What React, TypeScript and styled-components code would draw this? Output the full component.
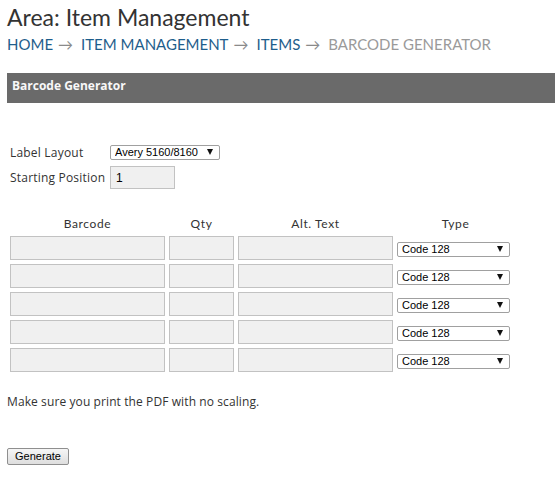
import styled, { createGlobalStyle } from 'styled-components'

const GlobalStyle = createGlobalStyle`
  html, body {
    margin: 0;
    padding: 0;
    background: #fff;
  }
  body {
    font-family: 'Open Sans', 'Liberation Sans', sans-serif;
    color: #333;
  }
`

const rows = [0, 1, 2, 3, 4]

const App = () => {
  return (
    <Page>
      <GlobalStyle />
      <Title>Area: Item Management</Title>
      <Crumbs>
        <a>Home</a>
        <Arrow>→</Arrow>
        <a>Item Management</a>
        <Arrow>→</Arrow>
        <a>Items</a>
        <Arrow>→</Arrow>
        <Current>Barcode Generator</Current>
      </Crumbs>

      <PanelBar>Barcode Generator</PanelBar>

      <SettingsGrid>
        <FieldLabel>Label Layout</FieldLabel>
        <SelectBox $width={110}>
          <select defaultValue="avery">
            <option value="avery">Avery 5160/8160</option>
          </select>
        </SelectBox>
        <FieldLabel>Starting Position</FieldLabel>
        <TextInput $width={65} $height={23} defaultValue="1" />
      </SettingsGrid>

      <BarcodeTable>
        <HeadCell>Barcode</HeadCell>
        <HeadCell>Qty</HeadCell>
        <HeadCell>Alt. Text</HeadCell>
        <HeadCell>Type</HeadCell>
        {rows.map((r) => (
          <Row key={r}>
            <TextInput $width={155} />
            <TextInput $width={65} />
            <TextInput $width={155} />
            <SelectBox $width={113}>
              <select defaultValue="128">
                <option value="128">Code 128</option>
              </select>
            </SelectBox>
          </Row>
        ))}
      </BarcodeTable>

      <Note>Make sure you print the PDF with no scaling.</Note>

      <GenerateButton type="button">Generate</GenerateButton>
    </Page>
  )
}

export default App

const Page = styled.div`
  padding: 4px 0 0 7px;
`

const Title = styled.h1`
  margin: 0;
  font-family: Lato, 'Open Sans', sans-serif;
  font-weight: 400;
  font-size: 23px;
  line-height: 27px;
  color: #333;
`

const Crumbs = styled.div`
  margin-top: 4px;
  font-family: Lato, 'Open Sans', sans-serif;
  font-size: 15px;
  line-height: 18px;
  text-transform: uppercase;
  color: #1e5e8c;
  display: flex;
  align-items: baseline;

  a {
    color: #1e5e8c;
    text-decoration: none;
  }
`

const Arrow = styled.span`
  color: #8a8a8a;
  margin: 0 8px 0 5px;
`

const Current = styled.span`
  color: #9a9a9a;
`

const PanelBar = styled.div`
  margin-top: 20px;
  height: 30px;
  box-sizing: border-box;
  padding: 3px 0 0 5px;
  background: #6a6a6a;
  color: #f8f8f8;
  font-weight: 700;
  font-size: 12px;
  line-height: 20px;
`

const SettingsGrid = styled.div`
  margin-top: 42px;
  padding-left: 3px;
  display: grid;
  grid-template-columns: 100px auto;
  justify-content: start;
  align-items: center;
  row-gap: 6px;
`

const FieldLabel = styled.span`
  font-size: 12px;
  line-height: 15px;
  color: #333;
  letter-spacing: 0.2px;
`

const TextInput = styled.input<{ $width: number; $height?: number }>`
  display: block;
  width: ${(p) => p.$width}px;
  height: ${(p) => p.$height ?? 24}px;
  box-sizing: border-box;
  margin: 0;
  padding: 0 5px;
  border: 1px solid #c2c2c2;
  background: #f0f0f0;
  font-family: 'Liberation Sans', Arial, sans-serif;
  font-size: 12px;
  color: #000;
  outline: none;
`

const SelectBox = styled.div<{ $width: number }>`
  position: relative;
  width: ${(p) => p.$width}px;
  height: 15px;

  select {
    display: block;
    appearance: none;
    -webkit-appearance: none;
    width: 100%;
    height: 15px;
    box-sizing: border-box;
    margin: 0;
    padding: 0 0 0 4px;
    border: 1px solid #a0a0a0;
    border-radius: 2px;
    background: #fff;
    font-family: 'Liberation Sans', Arial, sans-serif;
    font-size: 11px;
    line-height: 13px;
    color: #000;
    outline: none;
  }

  &::after {
    content: '';
    position: absolute;
    right: 7px;
    top: 4px;
    border-left: 3.5px solid transparent;
    border-right: 3.5px solid transparent;
    border-top: 6px solid #111;
    pointer-events: none;
  }
`

const BarcodeTable = styled.div`
  margin-top: 25px;
  padding-left: 3px;
  display: grid;
  grid-template-columns: 155px 65px 155px 117px;
  column-gap: 4px;
  row-gap: 4px;
  justify-content: start;
`

const HeadCell = styled.div`
  box-sizing: border-box;
  height: 18px;
  padding-top: 2px;
  font-family: Lato, 'Open Sans', sans-serif;
  font-size: 12px;
  line-height: 16px;
  letter-spacing: 0.6px;
  text-align: center;
  color: #333;
`

const Row = styled.div`
  display: contents;

  & > ${SelectBox} {
    align-self: center;
    margin-top: 2px;
  }
`

const Note = styled.p`
  margin: 21px 0 0;
  font-size: 12px;
  letter-spacing: 0.1px;
  color: #333;
`

const GenerateButton = styled.button`
  display: block;
  margin-top: 38px;
  width: 62px;
  height: 17px;
  padding: 0;
  border: 1px solid #8f8f8f;
  border-radius: 2px;
  background: linear-gradient(#f6f6f6, #dedede);
  font-family: 'Liberation Sans', Arial, sans-serif;
  font-size: 11px;
  line-height: 15px;
  color: #000;
`
